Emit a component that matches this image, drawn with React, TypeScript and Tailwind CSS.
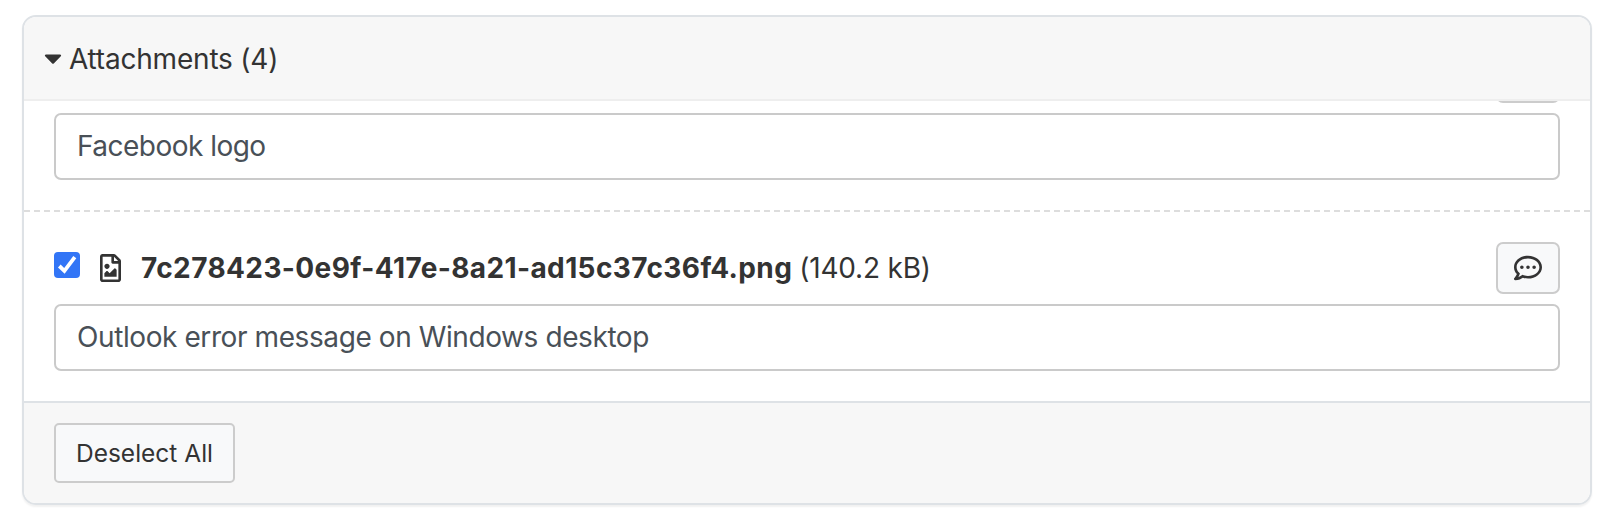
import { FaCaretDown, FaRegCommentDots, FaRegFileImage } from "react-icons/fa";

function CommentButton() {
  return (
    <button className="flex h-[52px] w-16 shrink-0 items-center justify-center rounded-[7px] border-2 border-[#ccc] bg-[#f8f9fa]">
      <FaRegCommentDots className="mb-px size-7" />
    </button>
  );
}

function Description({ value, tracking }: { value: string; tracking: string }) {
  return (
    <div className="flex h-[67px] shrink-0 items-center rounded-[7px] border-2 border-[#cacaca] bg-white px-[21px] pb-[2px] text-[#495057]">
      <span className={tracking}>{value}</span>
    </div>
  );
}

export default function App() {
  return (
    <div className="h-[524px] bg-white pt-[15px] pl-[22px] font-['Inter',sans-serif] text-[28px] leading-[42px] text-[#333]">
      <section className="flex h-[490px] w-[1570px] flex-col overflow-hidden rounded-[14px] border-2 border-[#dee2e6] shadow-[0_2px_2px_rgba(0,0,0,0.06)]">
        <header className="flex h-[84px] shrink-0 items-center border-b-2 border-[#eee] bg-[#f7f7f7] pl-5">
          <FaCaretDown className="h-7 w-[18px]" />
          <h2 className="ml-[7px] pt-[2px] tracking-[-0.2px]">Attachments (4)</h2>
        </header>

        <div className="flex h-[300px] shrink-0 flex-col justify-end overflow-hidden bg-white">
          <div className="flex shrink-0 flex-col gap-2.5 border-b-2 border-dashed border-[#ddd] px-[30px] pt-[30px] pb-[30px]">
            <div className="flex h-[52px] justify-end">
              <CommentButton />
            </div>
            <Description value="Facebook logo" tracking="tracking-[-0.52px]" />
          </div>
          <div className="flex shrink-0 flex-col gap-2.5 px-[30px] pt-[30px] pb-[30px]">
            <div className="flex h-[52px] items-center">
              <span className="mb-[6px] flex size-[26px] items-center justify-center rounded-[4px] bg-[#3275f6]">
                <svg viewBox="0 0 26 26" className="size-[26px]" fill="none" stroke="white" strokeWidth="3.8">
                  <path d="M5.3 14 10.4 18.8 20.8 5.2" />
                </svg>
              </span>
              <FaRegFileImage className="mb-px ml-5 h-7 w-[21px]" />
              <strong className="ml-5 font-bold tracking-[0.39px]">7c278423-0e9f-417e-8a21-ad15c37c36f4.png</strong>
              <span className="ml-[7px] tracking-[-0.2px]">(140.2 kB)</span>
              <div className="ml-auto">
                <CommentButton />
              </div>
            </div>
            <Description value="Outlook error message on Windows desktop" tracking="tracking-[-0.41px]" />
          </div>
        </div>

        <footer className="flex flex-1 items-center border-t-2 border-[#dee2e6] bg-[#f7f7f7] pl-[30px]">
          <button className="flex h-[60px] w-[181px] items-center justify-center rounded-[5px] border-2 border-[#ccc] bg-[#f8f9fa] text-[24.5px]">
            Deselect All
          </button>
        </footer>
      </section>
    </div>
  );
}
